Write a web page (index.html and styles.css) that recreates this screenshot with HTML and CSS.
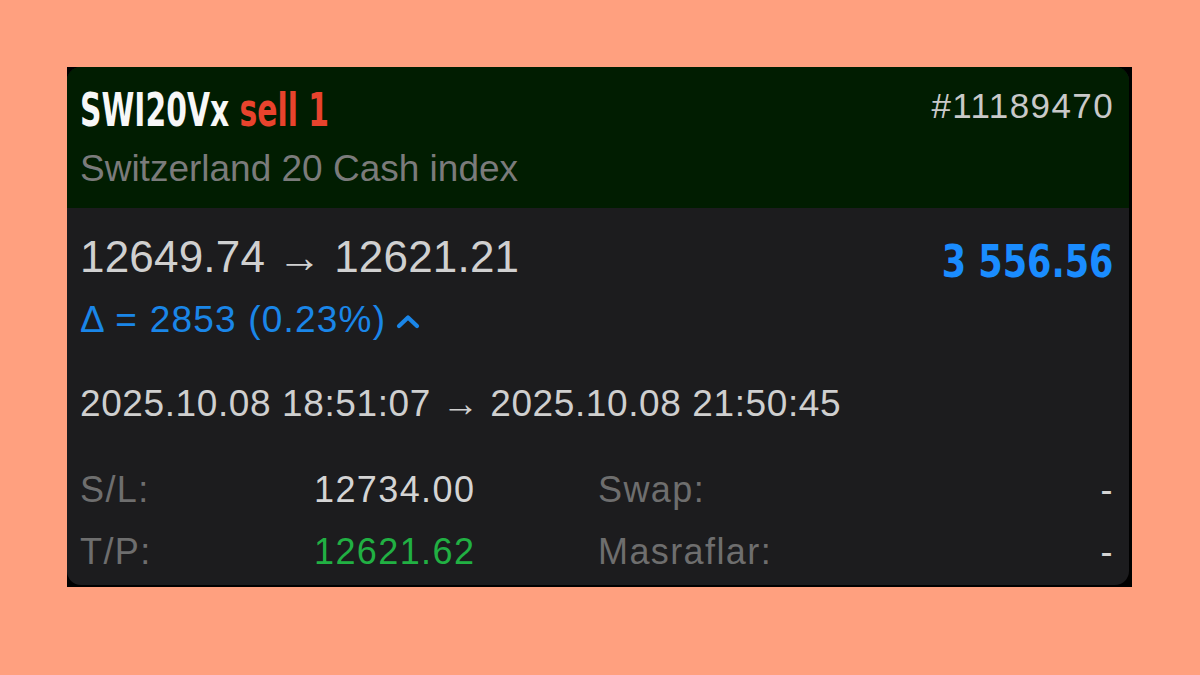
FILE: index.html
```html
<!DOCTYPE html>
<html lang="tr">
<head>
<meta charset="utf-8">
<title>SWI20Vx sell 1</title>
<link rel="stylesheet" href="styles.css">
</head>
<body>
<div class="frame">
  <div class="card">
    <header class="head">
      <div class="head-left">
        <div class="title"><span class="title-in"><span class="sym">SWI20Vx</span> <span class="side">sell 1</span></span></div>
        <div class="subtitle">Switzerland 20 Cash index</div>
      </div>
      <div class="ticket">#11189470</div>
    </header>
    <section class="body">
      <div class="top-row">
        <div class="prices">
          <div class="price">12649.74 → 12621.21</div>
          <div class="delta">Δ = 2853 (0.23%) <svg class="chev" width="24" height="15" viewBox="0 0 24 15"><polyline points="3,12 12,3.5 21,12" fill="none" stroke="#1a86e8" stroke-width="4.2" stroke-linecap="round" stroke-linejoin="round"/></svg></div>
        </div>
        <div class="profit"><span class="profit-in">3 556.56</span></div>
      </div>
      <div class="dates">2025.10.08 18:51:07 → 2025.10.08 21:50:45</div>
      <div class="grid">
        <div class="lbl">S/L:</div>
        <div class="val">12734.00</div>
        <div class="lbl">Swap:</div>
        <div class="dash">-</div>
        <div class="lbl">T/P:</div>
        <div class="val green">12621.62</div>
        <div class="lbl">Masraflar:</div>
        <div class="dash">-</div>
      </div>
    </section>
  </div>
</div>
</body>
</html>
```
FILE: styles.css
```css
html, body {
  margin: 0;
  padding: 0;
}
body {
  background: #ffa07f;
  width: 1200px;
  height: 675px;
  overflow: hidden;
  font-family: "Liberation Sans", Arial, sans-serif;
}
.frame {
  margin: 67px 0 0 67px;
  width: 1065px;
  height: 520px;
  background: #000;
  box-sizing: border-box;
  padding: 0 3px 2px 0;
}
.card {
  height: 100%;
  border-radius: 14px;
  overflow: hidden;
  background: #1c1c1e;
  display: flex;
  flex-direction: column;
}
.head {
  background: #011d01;
  height: 141px;
  box-sizing: border-box;
  padding: 20px 16px 0 13px;
  display: flex;
  justify-content: space-between;
  align-items: flex-start;
}
.title {
  font-family: "DejaVu Sans Condensed", "DejaVu Sans", sans-serif;
  font-weight: bold;
  font-size: 46px;
  line-height: 46px;
  white-space: nowrap;
  height: 46px;
}
.title-in {
  display: inline-block;
  transform: scaleX(0.72);
  transform-origin: 0 50%;
}
.sym { color: #f7f7f7; }
.side { color: #e8432d; }
.subtitle {
  margin-top: 17px;
  font-size: 37px;
  line-height: 37px;
  color: #7b7b7b;
  white-space: nowrap;
}
.ticket {
  margin-top: 1px;
  font-size: 35px;
  line-height: 35px;
  color: #c9c9c9;
  letter-spacing: 1.4px;
  margin-right: -1px;
}
.body {
  flex: 1;
  padding: 24px 16px 0 13px;
}
.top-row {
  display: flex;
  justify-content: space-between;
  align-items: flex-start;
}
.price {
  font-size: 44px;
  line-height: 50px;
  color: #d0d0d0;
  letter-spacing: 0.2px;
  white-space: nowrap;
}
.delta {
  margin-top: 16px;
  font-size: 37px;
  line-height: 44px;
  color: #1a86e8;
  letter-spacing: 1.2px;
  white-space: nowrap;
  display: flex;
  align-items: center;
}
.chev {
  margin-left: 10px;
  margin-top: 2px;
}
.profit {
  margin-top: 5px;
  font-family: "DejaVu Sans Condensed", "DejaVu Sans", sans-serif;
  font-weight: bold;
  font-size: 45px;
  line-height: 50px;
  color: #1a8cff;
  white-space: nowrap;
}
.profit-in {
  display: inline-block;
  transform: scaleX(0.865);
  transform-origin: 100% 50%;
}
.dates {
  margin-top: 40px;
  font-size: 37px;
  line-height: 44px;
  letter-spacing: 0.6px;
  color: #cfcfcf;
  white-space: nowrap;
}
.grid {
  margin-top: 33px;
  display: grid;
  grid-template-columns: 234px 284px 1fr auto;
  font-size: 36px;
  line-height: 62px;
  letter-spacing: 1.4px;
}
.lbl { color: #6e6e6e; }
.val { color: #d4d4d4; }
.val.green { color: #21b043; }
.dash { color: #d4d4d4; text-align: right; margin-right: -1px; }
```
